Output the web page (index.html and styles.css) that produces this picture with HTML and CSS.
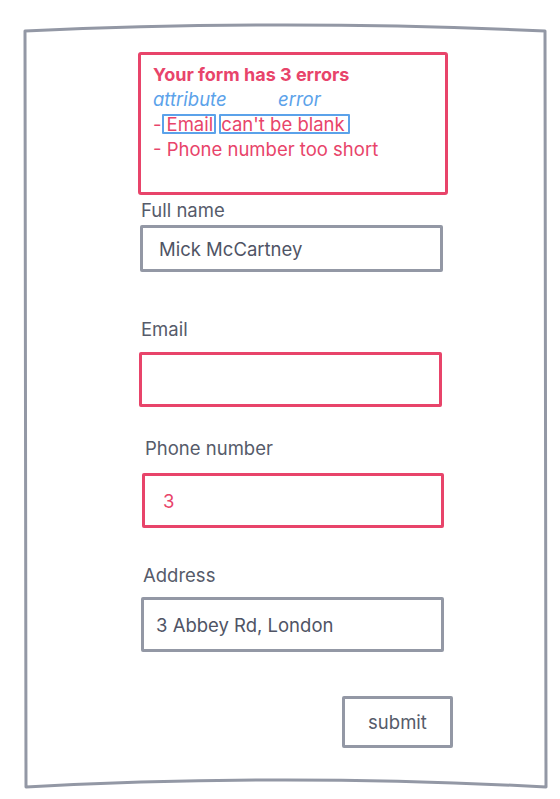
FILE: index.html
```html
<!DOCTYPE html>
<html lang="en">
<head>
    <meta charset="UTF-8">
    <meta name="viewport" content="width=device-width, initial-scale=1.0">
    <title>Form errors sketch</title>
    <link rel="stylesheet" href="styles.css">
</head>
<body>
    <div class="page">
        <!-- hand drawn sheet outline -->
        <svg class="frame" width="560" height="799" viewBox="0 0 560 799">
            <path d="M25 31 Q285 19 545 31 L546 787 Q285 773 26 787 Z" />
        </svg>

        <form class="sheet">
            <div class="errors">
                <div class="errors-title">Your form has 3 errors</div>
                <div class="errors-legend"><span class="legend-attr">attribute</span><span>error</span></div>
                <div class="errors-line">-<span class="tag tag-attr">Email</span><span class="tag tag-msg">can't be blank</span></div>
                <div class="errors-line">- Phone number too short</div>
            </div>

            <label class="field-label label-name">Full name</label>
            <input class="field-input input-name" type="text" value="Mick McCartney">

            <label class="field-label label-email">Email</label>
            <input class="field-input input-email invalid" type="text" value="">

            <label class="field-label label-phone">Phone number</label>
            <input class="field-input input-phone invalid" type="text" value="3">

            <label class="field-label label-address">Address</label>
            <input class="field-input input-address" type="text" value="3 Abbey Rd, London">

            <button class="submit" type="button">submit</button>
        </form>
    </div>
</body>
</html>
```

FILE: styles.css
```css
body {
    margin: 0;
    background-color: #fff;
    font-family: Inter, "Open Sans", sans-serif;
    color: #565b6a;
}
.page {
    position: relative;
    width: 560px;
    height: 799px;
    overflow: hidden;
}
.frame {
    position: absolute;
    left: 0;
    top: 0;
}
.frame path {
    fill: none;
    stroke: #9398a5;
    stroke-width: 3;
    stroke-linejoin: round;
}
.sheet {
    position: relative;
    display: flex;
    flex-direction: column;
    align-items: flex-start;
    padding: 52px 0 0 138px;
}

/* Error summary */
.errors {
    box-sizing: border-box;
    width: 310px;
    height: 143px;
    padding: 7px 12px 0 12px;
    border: 3px solid #e8446a;
    border-radius: 3px;
    color: #e8446a;
    font-size: 18.5px;
    line-height: 25px;
}
.errors-title {
    font-size: 18px;
    font-weight: 700;
}
.errors-legend {
    color: #5ba2ea;
    font-style: italic;
}
.legend-attr {
    display: inline-block;
    width: 125px;
}
.tag {
    display: inline-block;
    padding: 0 1px;
    line-height: 16px;
    border: 2px solid #5ba2ea;
    border-radius: 1px;
}
.tag-attr {
    padding-left: 3px;
}
.tag-msg {
    margin-left: 3px;
    padding: 0 3px 0 0;
}

/* Fields */
.field-label {
    font-size: 18.5px;
    line-height: 20px;
}
.field-input {
    box-sizing: border-box;
    width: 303px;
    height: 55px;
    margin: 0;
    padding: 0 0 0 16px;
    border: 3px solid #9398a5;
    border-radius: 2px;
    background: #fff;
    font-family: inherit;
    font-size: 18.5px;
    color: #4f5465;
    outline: none;
}
.field-input.invalid {
    border-color: #e8446a;
    color: #e8446a;
}
.label-name {
    margin: 5px 0 0 3px;
}
.input-name {
    height: 47px;
    margin: 5px 0 0 2px;
}
.label-email {
    margin: 47px 0 0 3px;
}
.input-email {
    margin: 13px 0 0 1px;
}
.label-phone {
    margin: 31px 0 0 7px;
}
.input-phone {
    width: 302px;
    margin: 15px 0 0 4px;
    padding-left: 18px;
}
.label-address {
    margin: 37px 0 0 5px;
}
.input-address {
    margin: 12px 0 0 3px;
    padding-left: 12px;
}
.submit {
    box-sizing: border-box;
    width: 111px;
    height: 52px;
    margin: 44px 0 0 204px;
    border: 3px solid #9398a5;
    border-radius: 2px;
    background: #fff;
    font-family: inherit;
    font-size: 18.5px;
    color: #565b6a;
}
```
